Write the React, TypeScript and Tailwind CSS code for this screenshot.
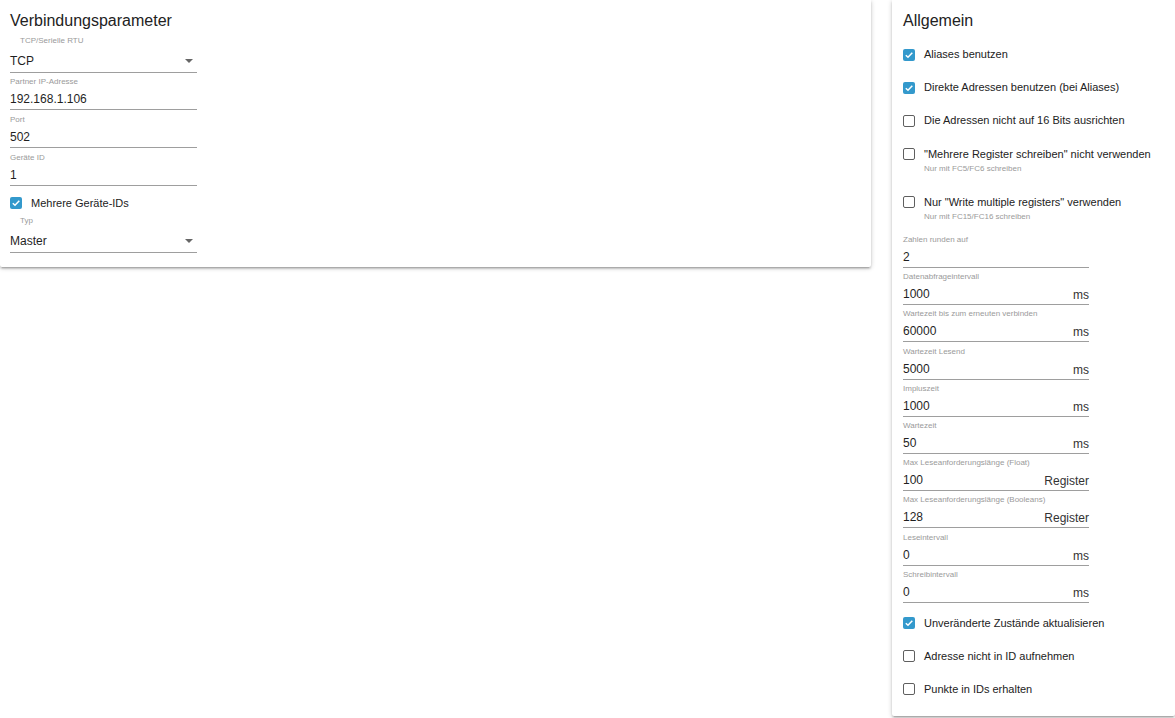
import React from "react";

const font = { fontFamily: '"Liberation Sans", Arial, sans-serif' };

type FieldProps = { label: string; value: string; suffix?: string; pitch?: string };

const Field = ({ label, value, suffix, pitch = "mb-[5px]" }: FieldProps) => (
  <div className={pitch}>
    <div className="text-[8px] leading-[10px] text-[#9a9a9a] whitespace-nowrap">{label}</div>
    <div className="flex h-[23px] items-center justify-between border-b border-[#9e9e9e] pt-[2px] text-[12px] text-[#1f1f1f]">
      <span>{value}</span>
      {suffix && <span className="pt-[2px] text-[#333]">{suffix}</span>}
    </div>
  </div>
);

const SelectField = ({ label, value, className = "" }: { label: string; value: string; className?: string }) => (
  <div className={className}>
    <div className="pl-[10px] text-[8px] leading-[10px] text-[#9a9a9a]">{label}</div>
    <div className="mt-[4px] flex h-[23px] items-center justify-between border-b border-[#9e9e9e] text-[12px] text-[#1f1f1f]">
      <span>{value}</span>
      <svg width="8" height="4" viewBox="0 0 8 4" className="mr-[4px]">
        <path d="M0 0 L8 0 L4 4 Z" fill="#666" />
      </svg>
    </div>
  </div>
);

const Box = ({ checked }: { checked?: boolean }) =>
  checked ? (
    <span className="flex h-[12px] w-[12px] shrink-0 items-center justify-center rounded-[2px] bg-[#3399cc]">
      <svg width="10" height="10" viewBox="0 0 10 10">
        <path d="M1.8 5.2 L4 7.3 L8.3 2.8" fill="none" stroke="#fff" strokeWidth="1.5" />
      </svg>
    </span>
  ) : (
    <span className="h-[12px] w-[12px] shrink-0 rounded-[2px] border-[1.5px] border-[#5f5f5f] bg-white" />
  );

const Check = ({ label, checked, sub }: { label: string; checked?: boolean; sub?: string }) =>
  sub ? (
    <div className="h-[48px] pt-[7px]">
      <div className="flex h-[20px] items-center gap-[9px]">
        <Box checked={checked} />
        <span className="text-[11px] text-[#222]">{label}</span>
      </div>
      <div className="pl-[21px] text-[8px] leading-[10px] text-[#9a9a9a]">{sub}</div>
    </div>
  ) : (
    <div className="flex h-[33px] items-center gap-[9px]">
      <Box checked={checked} />
      <span className="text-[11px] text-[#222]">{label}</span>
    </div>
  );

const cardShadow =
  "bg-white shadow-[0_2px_2px_0_rgba(0,0,0,0.14),0_3px_1px_-2px_rgba(0,0,0,0.12),0_1px_5px_0_rgba(0,0,0,0.2)]";

const timing: FieldProps[] = [
  { label: "Zahlen runden auf", value: "2" },
  { label: "Datenabfrageintervall", value: "1000", suffix: "ms" },
  { label: "Wartezeit bis zum erneuten verbinden", value: "60000", suffix: "ms" },
  { label: "Wartezeit Lesend", value: "5000", suffix: "ms" },
  { label: "Impluszeit", value: "1000", suffix: "ms" },
  { label: "Wartezeit", value: "50", suffix: "ms" },
  { label: "Max Leseanforderungslänge (Float)", value: "100", suffix: "Register" },
  { label: "Max Leseanforderungslänge (Booleans)", value: "128", suffix: "Register" },
  { label: "Leseintervall", value: "0", suffix: "ms" },
  { label: "Schreibintervall", value: "0", suffix: "ms" },
];

export default function App() {
  return (
    <div className="flex h-[718px] w-[1175px] items-start gap-[21px] overflow-hidden bg-white" style={font}>
      {/* Verbindungsparameter */}
      <section className={`w-[871px] shrink-0 rounded-b-[2px] px-[10px] pt-[11px] pb-[14px] ${cardShadow}`}>
        <h2 className="text-[16px] leading-[20px] text-[#222]">Verbindungsparameter</h2>
        <div className="w-[187px]">
          <SelectField label="TCP/Serielle RTU" value="TCP" className="mt-[5px] mb-[4px]" />
          <Field label="Partner IP-Adresse" value="192.168.1.106" />
          <Field label="Port" value="502" />
          <Field label="Geräte ID" value="1" pitch="mb-0" />
          <div className="mt-[4px] flex h-[26px] items-center gap-[9px]">
            <Box checked />
            <span className="text-[11px] text-[#222]">Mehrere Geräte-IDs</span>
          </div>
          <SelectField label="Typ" value="Master" />
        </div>
      </section>

      {/* Allgemein */}
      <section className={`h-[716px] flex-1 rounded-b-[2px] px-[11px] pt-[11px] ${cardShadow}`}>
        <h2 className="mb-[7px] text-[16px] leading-[20px] text-[#222]">Allgemein</h2>
        <Check label="Aliases benutzen" checked />
        <Check label="Direkte Adressen benutzen (bei Aliases)" checked />
        <Check label="Die Adressen nicht auf 16 Bits ausrichten" />
        <Check label={'"Mehrere Register schreiben" nicht verwenden'} sub="Nur mit FC5/FC6 schreiben" />
        <Check label={'Nur "Write multiple registers" verwenden'} sub="Nur mit FC15/FC16 schreiben" />
        <div className="mt-[2px] w-[186px]">
          {timing.map((f, i) => (
            <Field key={f.label} {...f} pitch={i === timing.length - 1 ? "mb-0" : "mb-[4.2px]"} />
          ))}
        </div>
        <div className="mt-[4px]">
          <Check label="Unveränderte Zustände aktualisieren" checked />
          <Check label="Adresse nicht in ID aufnehmen" />
          <Check label="Punkte in IDs erhalten" />
        </div>
      </section>
    </div>
  );
}
